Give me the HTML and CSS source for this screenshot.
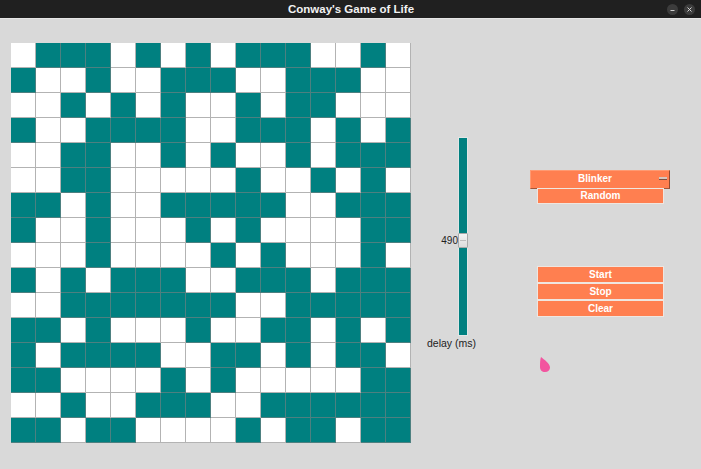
FILE: index.html
```html
<!DOCTYPE html>
<html>
<head>
<meta charset="utf-8">
<title>Conway's Game of Life</title>
<link rel="stylesheet" href="styles.css">
</head>
<body>
<div class="window">
  <header class="titlebar">
    <div></div>
    <div class="title">Conway's Game of Life</div>
    <div class="wbtns">
      <span class="wbtn"><svg width="11" height="11" viewBox="0 0 11 11"><line x1="3.5" y1="6.5" x2="7.5" y2="6.5" stroke="#d0d0d0" stroke-width="1"/></svg></span>
      <span class="wbtn"><svg width="11" height="11" viewBox="0 0 11 11"><path d="M3.5 3.5 L7.5 7.5 M7.5 3.5 L3.5 7.5" stroke="#d8d8d8" stroke-width="1"/></svg></span>
    </div>
  </header>
  <main class="content">
    <div class="board">
      <i></i><i class="on"></i><i class="on"></i><i class="on"></i><i></i><i class="on"></i><i></i><i class="on"></i><i></i><i class="on"></i><i class="on"></i><i class="on"></i><i></i><i></i><i class="on"></i><i></i>
      <i class="on"></i><i></i><i></i><i class="on"></i><i></i><i></i><i class="on"></i><i class="on"></i><i class="on"></i><i></i><i></i><i class="on"></i><i class="on"></i><i class="on"></i><i></i><i></i>
      <i></i><i></i><i class="on"></i><i></i><i class="on"></i><i></i><i class="on"></i><i></i><i></i><i class="on"></i><i></i><i class="on"></i><i class="on"></i><i></i><i></i><i></i>
      <i class="on"></i><i></i><i></i><i class="on"></i><i class="on"></i><i class="on"></i><i class="on"></i><i></i><i></i><i class="on"></i><i class="on"></i><i class="on"></i><i></i><i class="on"></i><i></i><i class="on"></i>
      <i></i><i></i><i class="on"></i><i class="on"></i><i></i><i></i><i class="on"></i><i></i><i class="on"></i><i></i><i></i><i class="on"></i><i></i><i class="on"></i><i class="on"></i><i class="on"></i>
      <i></i><i></i><i class="on"></i><i class="on"></i><i></i><i></i><i></i><i></i><i></i><i class="on"></i><i></i><i></i><i class="on"></i><i></i><i class="on"></i><i></i>
      <i class="on"></i><i class="on"></i><i></i><i class="on"></i><i></i><i></i><i class="on"></i><i class="on"></i><i class="on"></i><i class="on"></i><i class="on"></i><i></i><i></i><i class="on"></i><i class="on"></i><i class="on"></i>
      <i class="on"></i><i></i><i></i><i class="on"></i><i></i><i></i><i></i><i class="on"></i><i></i><i class="on"></i><i></i><i></i><i></i><i></i><i class="on"></i><i class="on"></i>
      <i></i><i></i><i></i><i class="on"></i><i></i><i></i><i></i><i></i><i class="on"></i><i></i><i class="on"></i><i></i><i></i><i></i><i class="on"></i><i></i>
      <i class="on"></i><i></i><i class="on"></i><i></i><i class="on"></i><i class="on"></i><i class="on"></i><i></i><i></i><i class="on"></i><i class="on"></i><i class="on"></i><i></i><i class="on"></i><i class="on"></i><i class="on"></i>
      <i></i><i></i><i class="on"></i><i class="on"></i><i class="on"></i><i class="on"></i><i class="on"></i><i class="on"></i><i class="on"></i><i></i><i></i><i class="on"></i><i class="on"></i><i class="on"></i><i class="on"></i><i class="on"></i>
      <i class="on"></i><i class="on"></i><i></i><i class="on"></i><i></i><i></i><i></i><i class="on"></i><i></i><i></i><i class="on"></i><i class="on"></i><i></i><i class="on"></i><i></i><i class="on"></i>
      <i class="on"></i><i></i><i class="on"></i><i class="on"></i><i class="on"></i><i class="on"></i><i></i><i></i><i class="on"></i><i class="on"></i><i></i><i class="on"></i><i></i><i class="on"></i><i class="on"></i><i></i>
      <i class="on"></i><i class="on"></i><i></i><i></i><i></i><i></i><i class="on"></i><i></i><i class="on"></i><i></i><i></i><i></i><i></i><i></i><i class="on"></i><i class="on"></i>
      <i></i><i></i><i class="on"></i><i></i><i></i><i class="on"></i><i class="on"></i><i class="on"></i><i></i><i></i><i class="on"></i><i class="on"></i><i class="on"></i><i class="on"></i><i class="on"></i><i class="on"></i>
      <i class="on"></i><i class="on"></i><i></i><i class="on"></i><i class="on"></i><i></i><i></i><i></i><i></i><i class="on"></i><i></i><i class="on"></i><i class="on"></i><i></i><i class="on"></i><i class="on"></i>
    </div>
    <div class="slider-col">
      <div class="track">
        <span class="value">490</span>
        <span class="thumb"></span>
      </div>
      <div class="slider-label">delay (ms)</div>
    </div>
    <div class="controls">
      <div class="combo"><span class="combo-text">Blinker</span><span class="combo-icon"></span></div>
      <button class="btn btn-random">Random</button>
      <div class="btn-stack">
        <button class="btn">Start</button>
        <button class="btn">Stop</button>
        <button class="btn">Clear</button>
      </div>
    </div>
  </main>
</div>
<svg class="cursor" width="12" height="15" viewBox="0 0 12 15"><path d="M2 0 C5 2.5 11 6.5 11 10.5 C11 13.2 9 15 6 15 C3 15 1 13 1 10 C1 6.5 1 3 2 0 Z" fill="#f2559f"/></svg>
</body>
</html>
```

FILE: styles.css
```css
* { box-sizing: border-box; }
html, body { margin: 0; padding: 0; }
body {
  width: 701px;
  height: 469px;
  overflow: hidden;
  background: #d9d9d9;
  font-family: "Liberation Sans", Arial, sans-serif;
  position: relative;
}
.window { display: flex; flex-direction: column; height: 100%; }
.titlebar {
  height: 19px;
  background: #202020;
  border-bottom: 1px solid #e6e6e6;
  display: grid;
  grid-template-columns: 1fr auto 1fr;
  align-items: center;
}
.title {
  color: #f2f2f2;
  font-weight: bold;
  font-size: 11.5px;
  line-height: 18px;
  padding-left: 1px;
}
.wbtns {
  display: flex;
  justify-content: flex-end;
  gap: 6px;
  padding-right: 6px;
  align-items: center;
}
.wbtn {
  width: 11px;
  height: 11px;
  border-radius: 50%;
  background: #3c3c3c;
  display: block;
}
.wbtn svg { display: block; }
.content {
  display: flex;
  align-items: flex-start;
  padding: 24px 0 0 11px;
}
.board {
  display: grid;
  grid-template-columns: repeat(16, 25px);
  grid-auto-rows: 25px;
  width: 400px;
  height: 400px;
}
.board i {
  display: block;
  background: #ffffff;
  border-right: 1px solid rgba(128, 128, 128, 0.6);
  border-bottom: 1px solid rgba(128, 128, 128, 0.6);
}
.board i.on { background: #008080; }
.slider-col {
  width: 119px;
  margin-top: 94px;
  display: flex;
  flex-direction: column;
}
.track {
  position: relative;
  margin-left: 47px;
  width: 10px;
  height: 199px;
  background: #008080;
  border: 1px solid #e2e6e6;
}
.thumb {
  position: absolute;
  left: -1px;
  right: -1px;
  top: 95px;
  height: 15px;
  background: linear-gradient(#f4f4f4, #dcdcdc);
  border: 1px solid #a9a9a9;
  border-radius: 1px;
}
.thumb::after {
  content: "";
  position: absolute;
  left: 1px;
  right: 1px;
  top: 6px;
  height: 1px;
  background: #bdbdbd;
}
.value {
  position: absolute;
  right: calc(100% + 1px);
  top: 97px;
  font-size: 10px;
  line-height: 12px;
  color: #222;
}
.slider-label {
  margin: 1px 0 0 16px;
  font-size: 10.5px;
  line-height: 12px;
  color: #222;
}
.controls {
  width: 140px;
  margin-top: 127px;
  display: flex;
  flex-direction: column;
  align-items: flex-start;
}
.combo {
  width: 140px;
  height: 19px;
  padding-bottom: 3px;
  background: #ff7f50;
  border: 1px solid #ff9a72;
  border-right-color: #8e4a30;
  border-bottom-color: #a0553a;
  display: flex;
  align-items: center;
}
.combo-text {
  flex: 1;
  text-align: center;
  color: #fff;
  font-weight: bold;
  font-size: 10px;
}
.combo-icon {
  width: 8px;
  height: 3px;
  margin-right: 2px;
  background: #d4c4bc;
  border-bottom: 1px solid #7a5040;
}
.btn {
  display: block;
  width: 127px;
  height: 17px;
  margin: 0 0 0 7px;
  padding: 0;
  background: #ff7f50;
  border: 1px solid #efe6e0;
  color: #fff;
  font-family: "Liberation Sans", Arial, sans-serif;
  font-weight: bold;
  font-size: 10px;
  line-height: 14px;
  text-align: center;
}
.btn-random { height: 16px; margin-top: -1px; }
.btn-stack {
  margin-top: 62px;
  display: flex;
  flex-direction: column;
}
.cursor {
  position: absolute;
  left: 539px;
  top: 357px;
}
```
